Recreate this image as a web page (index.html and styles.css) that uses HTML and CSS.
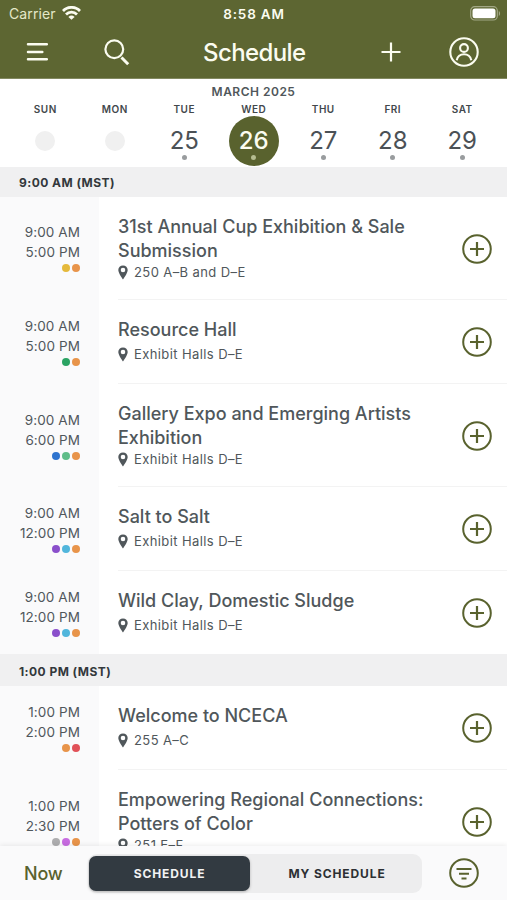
FILE: index.html
```html
<!DOCTYPE html>
<html lang="en">
<head>
<meta charset="utf-8">
<title>Schedule</title>
<link rel="stylesheet" href="styles.css">
</head>
<body>
<svg width="0" height="0" class="defs">
  <symbol id="pin" viewBox="0 0 10 15"><path fill-rule="evenodd" d="M5 .5C2.300.500.300 2.500.300 5c0 3.200 4.700 9.500 4.700 9.500S9.700 8.200 9.700 5C9.700 2.500 7.700.500 5 .500zM5 2.700a2.300 2.300 0 1 1 0 4.600 2.300 2.300 0 0 1 0-4.600z" fill="#50575b"/></symbol>
  <symbol id="add" viewBox="0 0 30 30"><g fill="none" stroke="#59622e" stroke-width="2"><circle cx="15" cy="15" r="13.800"/><path d="M15 8v14M8 15h14" stroke-width="2.200"/></g></symbol>
</svg>
<div class="app">
  <header class="top">
    <div class="status">
      <span class="carrier">Carrier</span>
      <svg class="wifi" width="19" height="14" viewBox="0 0 19 14"><g fill="none" stroke="#fbfcf0" stroke-width="2.800"><path d="M1 4.900a12 12 0 0 1 17 0"/><path d="M4 8.400a7.800 7.800 0 0 1 11 0"/></g><path d="M9.500 13.800 6.400 10.900a4.500 4.500 0 0 1 6.200 0z" fill="#fbfcf0"/></svg>
      <span class="clock">8:58 AM</span>
      <svg class="battery" width="31" height="15" viewBox="0 0 31 15"><rect x=".700" y=".700" width="26.600" height="13.300" rx="4" fill="none" stroke="#a2a785" stroke-width="1.200"/><rect x="2.500" y="2.500" width="23" height="9.700" rx="2.500" fill="#fff"/><path d="M28.800 5v5c1.700-.800 1.700-4.200 0-5z" fill="#a2a785"/></svg>
    </div>
    <nav class="nav">
      <svg width="22" height="20" viewBox="0 0 22 20"><path d="M2 2.300h18.800M2 10h14.300M2 17.300h18.800" stroke="#fbfcf0" stroke-width="2.500" stroke-linecap="round"/></svg>
      <svg width="26" height="27" viewBox="0 0 26 27"><g fill="none" stroke="#fbfcf0" stroke-width="2.200"><circle cx="10.300" cy="10.300" r="8.900"/><path d="m17.500 18.500 6.700 6.700" stroke-width="3"/></g></svg>
      <h1>Schedule</h1>
      <svg width="20" height="20" viewBox="0 0 20 20"><path d="M10 .500v19M.500 10h19" stroke="#fbfcf0" stroke-width="2.200"/></svg>
      <svg width="30" height="30" viewBox="0 0 30 30"><g fill="none" stroke="#fbfcf0" stroke-width="2.100"><circle cx="15" cy="15" r="13.700"/><circle cx="15" cy="11" r="3.900"/><path d="M7.700 23.200c1-4.300 3.700-5.900 7.300-5.900s6.300 1.600 7.300 5.900"/></g></svg>
    </nav>
  </header>

  <section class="calendar">
    <div class="month">MARCH 2025</div>
    <div class="week">
      <div class="day"><b>SUN</b><span class="blank"></span></div>
      <div class="day"><b>MON</b><span class="blank"></span></div>
      <div class="day"><b>TUE</b><span class="date">25</span></div>
      <div class="day"><b>WED</b><span class="date on">26</span></div>
      <div class="day"><b>THU</b><span class="date">27</span></div>
      <div class="day"><b>FRI</b><span class="date">28</span></div>
      <div class="day"><b>SAT</b><span class="date">29</span></div>
    </div>
  </section>

  <main class="list">
    <h2 class="slot">9:00 AM (MST)</h2>
    <article class="row tall first">
      <div class="time">9:00 AM<br>5:00 PM<div class="dots"><i class="yellow"></i><i class="orange"></i></div></div>
      <div class="info"><h3>31st Annual Cup Exhibition &amp; Sale<br>Submission</h3><p><svg><use href="#pin"/></svg>250 A–B and D–E</p></div>
      <svg class="add"><use href="#add"/></svg>
    </article>
    <article class="row">
      <div class="time">9:00 AM<br>5:00 PM<div class="dots"><i class="green"></i><i class="orange"></i></div></div>
      <div class="info"><h3>Resource Hall</h3><p><svg><use href="#pin"/></svg>Exhibit Halls D–E</p></div>
      <svg class="add"><use href="#add"/></svg>
    </article>
    <article class="row tall">
      <div class="time">9:00 AM<br>6:00 PM<div class="dots"><i class="blue"></i><i class="mint"></i><i class="orange"></i></div></div>
      <div class="info"><h3>Gallery Expo and Emerging Artists<br>Exhibition</h3><p><svg><use href="#pin"/></svg>Exhibit Halls D–E</p></div>
      <svg class="add"><use href="#add"/></svg>
    </article>
    <article class="row">
      <div class="time">9:00 AM<br>12:00 PM<div class="dots"><i class="purple"></i><i class="sky"></i><i class="orange"></i></div></div>
      <div class="info"><h3>Salt to Salt</h3><p><svg><use href="#pin"/></svg>Exhibit Halls D–E</p></div>
      <svg class="add"><use href="#add"/></svg>
    </article>
    <article class="row last">
      <div class="time">9:00 AM<br>12:00 PM<div class="dots"><i class="purple"></i><i class="sky"></i><i class="orange"></i></div></div>
      <div class="info"><h3>Wild Clay, Domestic Sludge</h3><p><svg><use href="#pin"/></svg>Exhibit Halls D–E</p></div>
      <svg class="add"><use href="#add"/></svg>
    </article>
    <h2 class="slot later">1:00 PM (MST)</h2>
    <article class="row">
      <div class="time">1:00 PM<br>2:00 PM<div class="dots"><i class="orange"></i><i class="red"></i></div></div>
      <div class="info"><h3>Welcome to NCECA</h3><p><svg><use href="#pin"/></svg>255 A–C</p></div>
      <svg class="add"><use href="#add"/></svg>
    </article>
    <article class="row tall">
      <div class="time">1:00 PM<br>2:30 PM<div class="dots"><i class="gray"></i><i class="violet"></i><i class="orange"></i></div></div>
      <div class="info"><h3>Empowering Regional Connections:<br>Potters of Color</h3><p><svg><use href="#pin"/></svg>251 E–F</p></div>
      <svg class="add"><use href="#add"/></svg>
    </article>
  </main>

  <footer class="bar">
    <span class="now">Now</span>
    <div class="tabs"><span class="tab active">SCHEDULE</span><span class="tab">MY SCHEDULE</span></div>
    <svg width="30" height="30" viewBox="0 0 30 30"><g fill="none" stroke="#59622e" stroke-width="2"><circle cx="15" cy="15" r="13.800"/><path d="M7.500 11h15M10 15.800h10M12.500 20.500h5" stroke-width="2.100"/></g></svg>
  </footer>
</div>
</body>
</html>
```
FILE: styles.css
```css
* { box-sizing: border-box; margin: 0; padding: 0; }
body { width: 507px; height: 900px; overflow: hidden; background: #fff; font-family: Inter, sans-serif; color: #50575b; }
svg { display: block; flex: none; }
.defs { position: absolute; }
.app { width: 507px; height: 900px; display: flex; flex-direction: column; overflow: hidden; }

.top { height: 79px; flex: none; background: #5d6632; color: #fbfcf0; border-bottom: 1px solid #828960; }
.status { height: 27px; display: grid; grid-template-columns: 53px 154px 76px 1fr; align-items: center; padding: 0 5px 0 9px; }
.carrier { font-size: 14px; letter-spacing: .1px; color: #e4e8c9; }
.wifi { margin-bottom: 1px; }
.clock { font-size: 13.500px; font-weight: 600; letter-spacing: .800px; text-align: center; white-space: nowrap; }
.battery { margin-top: -1px; margin-right: 1px; justify-self: end; }
.nav { height: 50px; display: grid; grid-template-columns: 78px 74px 203px 68px 30px; align-items: center; padding: 0 0 0 26px; }
.nav h1 { font-size: 24px; font-weight: 500; letter-spacing: -.6px; margin-left: 25px; }

.calendar { height: 88px; flex: none; }
.month { padding-top: 4px; height: 22px; line-height: 17px; font-size: 12px; font-weight: 600; letter-spacing: .5px; text-align: center; }
.week { display: grid; grid-template-columns: repeat(7, 69.500px); margin-left: 10.500px; }
.day { display: flex; flex-direction: column; align-items: center; }
.day b { height: 15px; line-height: 17px; font-size: 10px; font-weight: 600; letter-spacing: .5px; color: #42484c; }
.date { position: relative; width: 50px; height: 50px; border-radius: 50%; text-align: center; line-height: 50px; font-size: 24px; font-weight: 400; color: #4b5156; }
.date::after { content: ""; position: absolute; left: 22.500px; bottom: 6.500px; width: 5px; height: 5px; border-radius: 50%; background: #999c9e; }
.date.on { background: #59622e; color: #fbfcf0; font-weight: 500; }
.date.on::after { background: #b5bd91; }
.blank { width: 20px; height: 20px; margin-top: 15px; border-radius: 50%; background: #f0f0f0; }

.list { flex: 1; min-height: 0; overflow: hidden; }
.slot { height: 30px; line-height: 31px; padding-left: 19px; background: #f0f0f1; font-size: 12px; font-weight: 700; letter-spacing: .450px; color: #33383c; }
.slot.later { height: 32px; line-height: 35px; }
.row { height: 84px; display: grid; grid-template-columns: 99px 1fr 46px; align-items: center; background: linear-gradient(#f3f3f3, #f3f3f3) 118px 100% / 389px 1px no-repeat; }
.row.tall { height: 103px; }
.row.last { height: 83px; background: none; }
.time { height: 100%; display: flow-root; padding: 16px 19px 0 0; background: #fafafb; text-align: right; font-size: 13.500px; line-height: 20px; letter-spacing: .1px; }
.tall .time { padding-top: 26px; }
.first .time { padding-top: 25px; }
.dots { height: 12px; display: flex; justify-content: flex-end; align-items: center; gap: 1.800px; }
.dots i { width: 8px; height: 8px; border-radius: 50%; }
.yellow { background: #e5b93c; }
.orange { background: #e8944a; }
.green { background: #2ba363; }
.blue { background: #2e74cf; }
.mint { background: #5fbd88; }
.purple { background: #8a4fcb; }
.sky { background: #51b6dc; }
.red { background: #e15158; }
.gray { background: #adadaf; }
.violet { background: #c76ce0; }
.info { height: 100%; padding: 18px 0 0 19px; white-space: nowrap; }
.info h3 { font-size: 18px; font-weight: 500; line-height: 24px; }
.info p { display: flex; align-items: center; gap: 6px; height: 18px; margin-top: 3px; font-size: 13px; letter-spacing: .4px; }
.tall .info p { margin-top: 0; }
.info svg { width: 10px; height: 15px; }
.add { width: 30px; height: 30px; margin-left: .5px; }

.bar { height: 54px; flex: none; display: grid; grid-template-columns: 64px 334px 1fr; align-items: center; padding: 0 0 0 24px; background: #fafafb; box-shadow: 0 -1px 5px rgba(0,0,0,.08); position: relative; }
.now { font-size: 18px; font-weight: 500; letter-spacing: -.2px; color: #59622e; }
.tabs { height: 39px; display: grid; grid-template-columns: 161px 1fr; padding: 2px 1px; border-radius: 9px; background: #ededee; }
.tab { display: flex; align-items: center; justify-content: center; padding-left: 3px; font-size: 12px; font-weight: 700; letter-spacing: .9px; color: #2c3033; border-radius: 7px; }
.tab.active { padding-left: 0; background: #323a41; color: #f1f2f3; box-shadow: 0 1px 3px rgba(0,0,0,.25); }
.bar svg { margin-left: 27px; }
```
